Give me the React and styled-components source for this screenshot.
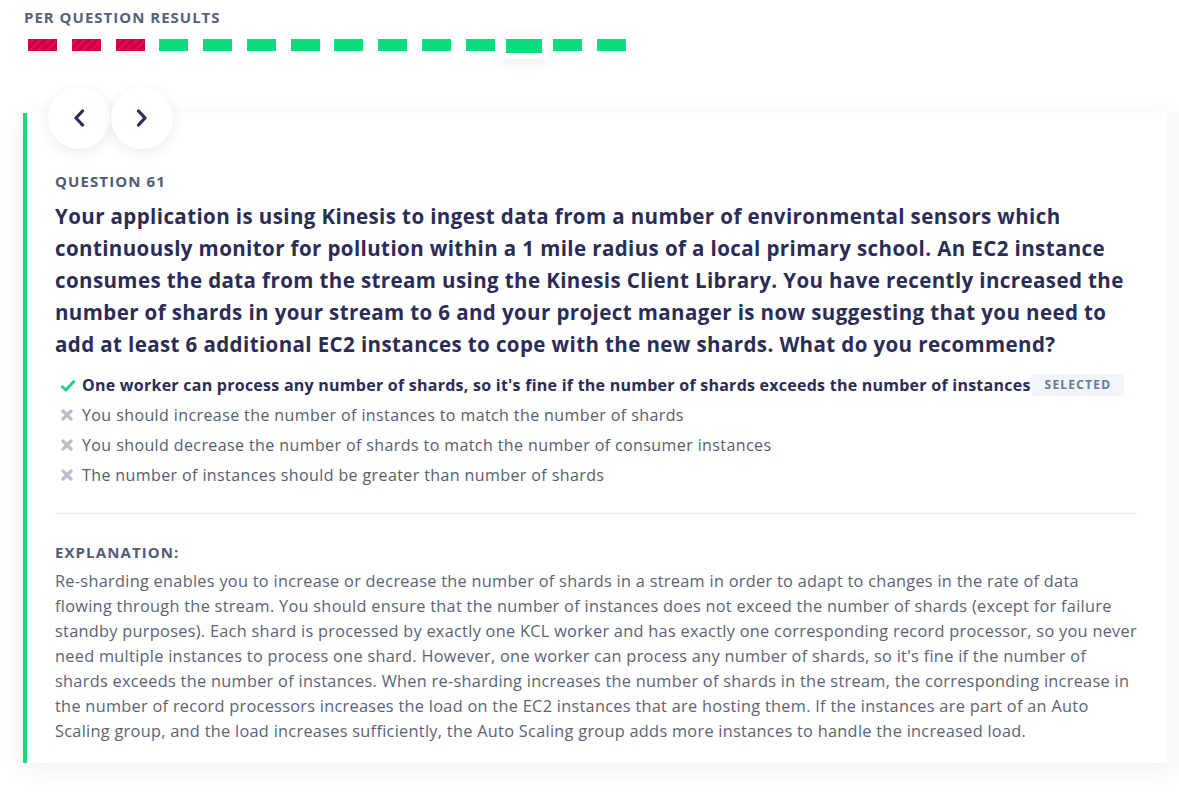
import React from "react";
import styled, { createGlobalStyle, css } from "styled-components";

const GlobalStyle = createGlobalStyle`
  html, body { margin: 0; padding: 0; background: #ffffff; overflow-x: hidden; }
  body { font-family: "Open Sans", "Noto Sans", sans-serif; -webkit-font-smoothing: antialiased; }
  * { box-sizing: border-box; }
`;

const Page = styled.div`
  width: 1179px;
  min-height: 802px;
  background: #fff;
`;

const ResultsSection = styled.section`
  padding: 7px 0 0 24px;
`;

const SectionLabel = styled.h3`
  margin: 0;
  font-size: 15px;
  line-height: 20px;
  font-weight: 700;
  letter-spacing: 1px;
  color: #56617a;
`;

const BarRow = styled.div`
  display: flex;
  align-items: center;
  gap: 14.75px;
  margin: 12px 0 0 4px;
  height: 12px;
`;

const ResultBar = styled.span`
  display: block;
  flex: none;
  width: 29px;
  height: 12px;
  background: #0bdc80;
  ${(p) =>
    p.$status === "wrong" &&
    css`
      background: repeating-linear-gradient(
        -45deg,
        #e2074f 0px,
        #e2074f 3px,
        #c70042 3px,
        #c70042 6px
      );
    `}
  ${(p) =>
    p.$active &&
    css`
      width: 36px;
      height: 14px;
      margin: 1px -3.5px 0;
      box-shadow: 0 0 0 6px #fff, 0 4px 14px 6px rgba(30, 40, 60, 0.07);
    `}
`;

const Card = styled.article`
  display: flex;
  margin: 62px 0 0 23px;
  border-left: 4px solid #17d97c;
  background: #fff;
  box-shadow: 0 6px 24px rgba(30, 40, 70, 0.07);
`;

const CardMain = styled.div`
  flex: 1;
  min-width: 0;
  padding: 0 30px 19px 28px;
`;

const EdgeStrip = styled.div`
  flex: none;
  width: 12px;
  background: #f9fafc;
`;

const NavRow = styled.div`
  display: flex;
  gap: 1px;
  margin: -26px 0 0 -7px;
`;

const NavButton = styled.button`
  width: 62px;
  height: 62px;
  border: none;
  border-radius: 50%;
  background: #fff;
  box-shadow: 0 4px 14px rgba(30, 40, 70, 0.09);
  display: flex;
  align-items: center;
  justify-content: center;
  padding: 0;
  cursor: pointer;
  color: #2c2a5c;
`;

const SectionHeading = styled.div`
  font-size: 15px;
  line-height: 22px;
  font-weight: 700;
  letter-spacing: 1.1px;
  color: #4f5c74;
`;

const QuestionLabel = styled(SectionHeading)`
  margin-top: 21px;
`;

const QuestionText = styled.h2`
  margin: 8px 0 0;
  font-size: 20.5px;
  line-height: 32px;
  font-weight: 700;
  color: #2b2c55;
  letter-spacing: 0.4px;
`;

const AnswerList = styled.ul`
  list-style: none;
  margin: 10px 0 0;
  padding: 0 0 0 5px;
`;

const Answer = styled.li`
  display: flex;
  align-items: center;
  height: 30px;
  font-size: 16px;
  color: ${(p) => (p.$selected ? "#2b2c55" : "#545d6e")};
  font-weight: ${(p) => (p.$selected ? 700 : 400)};
  letter-spacing: ${(p) => (p.$selected ? "0.25px" : "0.4px")};
  white-space: nowrap;
`;

const IconBox = styled.span`
  display: inline-flex;
  width: 22px;
  flex: none;
  align-items: center;
`;

const Badge = styled.span`
  display: inline-block;
  margin-left: 1px;
  padding: 0 13px;
  height: 22px;
  line-height: 22px;
  border-radius: 4px;
  background: #f1f5f9;
  color: #6b7890;
  font-size: 12px;
  font-weight: 700;
  letter-spacing: 1.2px;
`;

const Divider = styled.hr`
  margin: 23px 0 0;
  border: none;
  border-top: 1px solid #e9eaee;
`;

const ExplanationLabel = styled(SectionHeading)`
  margin-top: 27px;
`;

const ExplanationText = styled.p`
  margin: 6px 0 0;
  font-size: 16.3px;
  line-height: 25px;
  letter-spacing: 0.3px;
  color: #5a6375;
`;

const results = [
  "wrong", "wrong", "wrong",
  "right", "right", "right", "right", "right", "right", "right", "right",
  "right", "right", "right",
];

const Check = () => (
  <svg width="16" height="13" viewBox="0 0 16 13">
    <path d="M1.5 7 L5.8 11 L14.5 1.8" fill="none" stroke="#1fd47f" strokeWidth="3" strokeLinejoin="miter" />
  </svg>
);

const Cross = () => (
  <svg width="12" height="12" viewBox="0 0 12 12" style={{ marginLeft: 1 }}>
    <path d="M2 2 L10 10 M10 2 L2 10" fill="none" stroke="#b9bfca" strokeWidth="3.2" strokeLinecap="round" />
  </svg>
);

const ChevronLeft = () => (
  <svg width="12" height="18" viewBox="0 0 12 18">
    <path d="M9.5 2 L3 9 L9.5 16" fill="none" stroke="currentColor" strokeWidth="3.2" strokeLinecap="round" strokeLinejoin="round" />
  </svg>
);

const ChevronRight = () => (
  <svg width="12" height="18" viewBox="0 0 12 18">
    <path d="M2.5 2 L9 9 L2.5 16" fill="none" stroke="currentColor" strokeWidth="3.2" strokeLinecap="round" strokeLinejoin="round" />
  </svg>
);

const answers = [
  { text: "One worker can process any number of shards, so it's fine if the number of shards exceeds the number of instances", selected: true },
  { text: "You should increase the number of instances to match the number of shards" },
  { text: "You should decrease the number of shards to match the number of consumer instances" },
  { text: "The number of instances should be greater than number of shards" },
];

export default function App() {
  return (
    <Page>
      <GlobalStyle />
      <ResultsSection>
        <SectionLabel>PER QUESTION RESULTS</SectionLabel>
        <BarRow>
          {results.map((r, i) => (
            <ResultBar key={i} $status={r} $active={i === 11} />
          ))}
        </BarRow>
      </ResultsSection>
      <Card>
        <CardMain>
          <NavRow>
            <NavButton aria-label="Previous question"><ChevronLeft /></NavButton>
            <NavButton aria-label="Next question"><ChevronRight /></NavButton>
          </NavRow>
          <QuestionLabel>QUESTION 61</QuestionLabel>
          <QuestionText>
            Your application is using Kinesis to ingest data from a number of environmental sensors which
            continuously monitor for pollution within a 1 mile radius of a local primary school. An EC2 instance
            consumes the data from the stream using the Kinesis Client Library. You have recently increased the
            number of shards in your stream to 6 and your project manager is now suggesting that you need to add at
            least 6 additional EC2 instances to cope with the new shards. What do you recommend?
          </QuestionText>
          <AnswerList>
            {answers.map((a, i) => (
              <Answer key={i} $selected={a.selected}>
                <IconBox>{a.selected ? <Check /> : <Cross />}</IconBox>
                {a.text}
                {a.selected && <Badge>SELECTED</Badge>}
              </Answer>
            ))}
          </AnswerList>
          <Divider />
          <ExplanationLabel>EXPLANATION:</ExplanationLabel>
          <ExplanationText>
            Re-sharding enables you to increase or decrease the number of shards in a stream in order to adapt to
            changes in the rate of data flowing through the stream. You should ensure that the number of instances
            does not exceed the number of shards (except for failure standby purposes). Each shard is processed by
            exactly one KCL worker and has exactly one corresponding record processor, so you never need multiple
            instances to process one shard. However, one worker can process any number of shards, so it's fine if the
            number of shards exceeds the number of instances. When re-sharding increases the number of shards in the
            stream, the corresponding increase in the number of record processors increases the load on the EC2
            instances that are hosting them. If the instances are part of an Auto Scaling group, and the load
            increases sufficiently, the Auto Scaling group adds more instances to handle the increased load.
          </ExplanationText>
        </CardMain>
        <EdgeStrip />
      </Card>
    </Page>
  );
}
